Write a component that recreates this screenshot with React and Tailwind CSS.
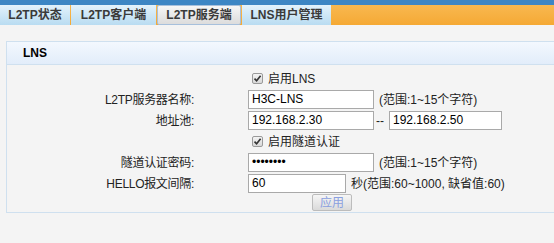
const font = { fontFamily: '"Liberation Sans", "Noto Sans CJK SC", sans-serif' };

const tabs = [
  { label: "L2TP状态", w: "w-[70px]" },
  { label: "L2TP客户端", w: "w-[85px]" },
  { label: "L2TP服务端", w: "w-[84px]", active: true },
  { label: "LNS用户管理", w: "w-[89px]" },
];

const Label = ({ children }) => (
  <div className="w-[188px] shrink-0 pr-[1px] text-right tracking-[-0.3px]">{children}</div>
);

const TextBox = ({ value, w = "w-[126px]" }) => (
  <div className={`${w} h-[19px] shrink-0 border border-[#a9a9a9] bg-white pl-[3px] text-[12px] leading-[17px] text-black`}>
    {value}
  </div>
);

const Check = ({ children }) => (
  <div className="flex items-center">
    <span className="ml-[3px] flex h-[11px] w-[11px] items-center justify-center rounded-[2px] border border-[#9a9a9a] bg-gradient-to-b from-[#f4f4f4] to-[#d8d8d8]">
      <svg width="9" height="9" viewBox="0 0 9 9">
        <path d="M1.5 4.6 L3.6 6.8 L7.6 1.8" fill="none" stroke="#333" strokeWidth="1.6" />
      </svg>
    </span>
    <span className="ml-[5px]">{children}</span>
  </div>
);

export default function App() {
  return (
    <div className="h-[243px] w-[554px] overflow-hidden bg-[#f4f4f4] text-[12px] text-[#222]" style={font}>
      <div className="h-[5px] bg-[#3d86c4]" />
      <div className="flex h-[20px] bg-gradient-to-b from-[#f8b84f] to-[#f5a934]">
        {tabs.map((t) => (
          <div
            key={t.label}
            className={`${t.w} mr-[1px] flex shrink-0 items-center justify-center text-[12px] font-bold text-[#3a3a3a] ${
              t.active
                ? "rounded-[2px] border border-[#a7c0dc] bg-gradient-to-b from-[#f6f6f6] to-[#dcdcdc]"
                : "bg-gradient-to-b from-[#e3f2fb] to-[#b9dcf1]"
            }`}
          >
            {t.label}
          </div>
        ))}
      </div>

      <div className="ml-[6px] mt-[16px] border border-r-0 border-[#cfe0ef]">
        <div className="flex h-[23px] items-center border-b border-[#cfe0ef] bg-gradient-to-b from-[#f3f8fe] to-[#e2edfa] pl-[16px] text-[12px] font-bold text-black">
          LNS
        </div>
        <div className="flex flex-col pb-[1px] pt-[3px]">
          <div className="flex h-[21px] items-center">
            <div className="w-[242px] shrink-0" />
            <Check>启用LNS</Check>
          </div>
          <div className="flex h-[21px] items-center">
            <Label>L2TP服务器名称:</Label>
            <div className="w-[53px] shrink-0" />
            <TextBox value="H3C-LNS" />
            <span className="ml-[5px]">(范围:1~15个字符)</span>
          </div>
          <div className="flex h-[21px] items-center">
            <Label>地址池:</Label>
            <div className="w-[53px] shrink-0" />
            <TextBox value="192.168.2.30" />
            <span className="w-[15px] shrink-0 pl-[2px]">--</span>
            <TextBox value="192.168.2.50" w="w-[113px]" />
          </div>
          <div className="flex h-[21px] items-center">
            <div className="w-[242px] shrink-0" />
            <Check>启用隧道认证</Check>
          </div>
          <div className="flex h-[21px] items-center">
            <Label>隧道认证密码:</Label>
            <div className="w-[53px] shrink-0" />
            <TextBox value="••••••••" />
            <span className="ml-[5px]">(范围:1~15个字符)</span>
          </div>
          <div className="flex h-[21px] items-center">
            <Label>HELLO报文间隔:</Label>
            <div className="w-[53px] shrink-0" />
            <TextBox value="60" w="w-[98px]" />
            <span className="ml-[5px]">秒(范围:60~1000, 缺省值:60)</span>
          </div>
          <div className="flex h-[17px] items-center">
            <div className="w-[305px] shrink-0" />
            <div className="flex h-[17px] w-[40px] items-center justify-center rounded-[2px] border border-[#bcbcbc] bg-gradient-to-b from-[#f6f6f6] to-[#dadada] text-[12px] text-[#8a9fe0]">
              应用
            </div>
          </div>
        </div>
      </div>
    </div>
  );
}
